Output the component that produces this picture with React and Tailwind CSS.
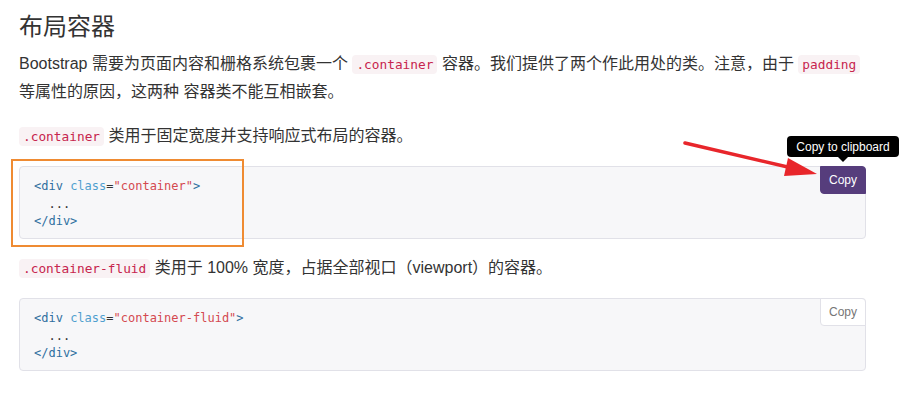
import React from "react";

const sans = { fontFamily: '"Liberation Sans", Arial, "Noto Sans CJK SC", sans-serif' };

function InlineCode({ children }) {
  return (
    <code className="rounded-[4px] bg-[#f9f2f4] px-[4px] py-[2px] text-[12.8px] leading-[16px] text-[#c7254e] [font-family:'DejaVu_Sans_Mono',monospace]">
      {children}
    </code>
  );
}

function CodeBlock({ cls, active }) {
  return (
    <div className="relative">
      <pre className="h-[73px] rounded-[4px] border border-[#e1e1e8] bg-[#f7f7f9] px-[14px] pt-[11px] text-[12px] leading-[17.5px] text-[#333] [font-family:'DejaVu_Sans_Mono',monospace]">
        <span className="text-[#2f6f9f]">&lt;div</span>{" "}
        <span className="text-[#4f9fcf]">class</span>
        <span className="text-[#333]">=</span>
        <span className="text-[#d44950]">"{cls}"</span>
        <span className="text-[#2f6f9f]">&gt;</span>
        {"\n  ...\n"}
        <span className="text-[#2f6f9f]">&lt;/div&gt;</span>
      </pre>
      {active ? (
        <>
          <div className="absolute right-0 top-0 h-[28px] w-[46px] rounded-bl-[4px] rounded-tr-[4px] border border-[#563d7c] bg-[#563d7c] text-center text-[12px] leading-[26px] text-white" style={sans}>
            Copy
          </div>
          <div className="absolute right-[-33px] top-[-30px] flex h-[21px] w-[112px] items-center justify-center rounded-[4px] bg-black text-[12px] text-white" style={sans}>
            Copy to clipboard
            <span className="absolute left-1/2 top-full -ml-[5px] h-0 w-0 border-x-[5px] border-t-[5px] border-x-transparent border-t-black"></span>
          </div>
        </>
      ) : (
        <div className="absolute right-0 top-0 h-[28px] w-[46px] rounded-bl-[4px] rounded-tr-[4px] border border-[#e1e1e8] bg-white text-center text-[12px] leading-[26px] text-[#767676]" style={sans}>
          Copy
        </div>
      )}
    </div>
  );
}

export default function App() {
  return (
    <div className="relative h-[400px] w-[908px] overflow-hidden bg-white text-[#333]" style={sans}>
      <div className="w-[847px] pl-[19px] box-content">
        <h1 className="mt-[14px] text-[24px] font-normal leading-[26px]">布局容器</h1>
        <p className="mt-[10px] text-[16px] leading-[28px]">
          <span className="whitespace-nowrap">
            Bootstrap 需要为页面内容和栅格系统包裹一个 <InlineCode>.container</InlineCode> 容器。我们提供了两个作此用处的类。注意，由于 <InlineCode>padding</InlineCode>
          </span>
          <br />
          等属性的原因，这两种 容器类不能互相嵌套。
        </p>
        <p className="mt-[16px] text-[16px] leading-[28px]">
          <InlineCode>.container</InlineCode> 类用于固定宽度并支持响应式布局的容器。
        </p>
        <div className="mt-[16px]">
          <CodeBlock cls="container" active />
        </div>
        <p className="mt-[15px] text-[16px] leading-[28px]">
          <InlineCode>.container-fluid</InlineCode> 类用于 100% 宽度，占据全部视口（viewport）的容器。
        </p>
        <div className="mt-[16px]">
          <CodeBlock cls="container-fluid" />
        </div>
      </div>

      <div className="pointer-events-none absolute left-[11px] top-[159px] h-[88px] w-[233px] border-2 border-[#ef8b32]"></div>

      <svg className="pointer-events-none absolute left-0 top-0" width="908" height="400" viewBox="0 0 908 400">
        <line x1="685" y1="143" x2="792" y2="168" stroke="#e8262b" strokeWidth="3.5" strokeLinecap="round" />
        <polygon points="817,174 788,158 784,176" fill="#e8262b" />
      </svg>
    </div>
  );
}
